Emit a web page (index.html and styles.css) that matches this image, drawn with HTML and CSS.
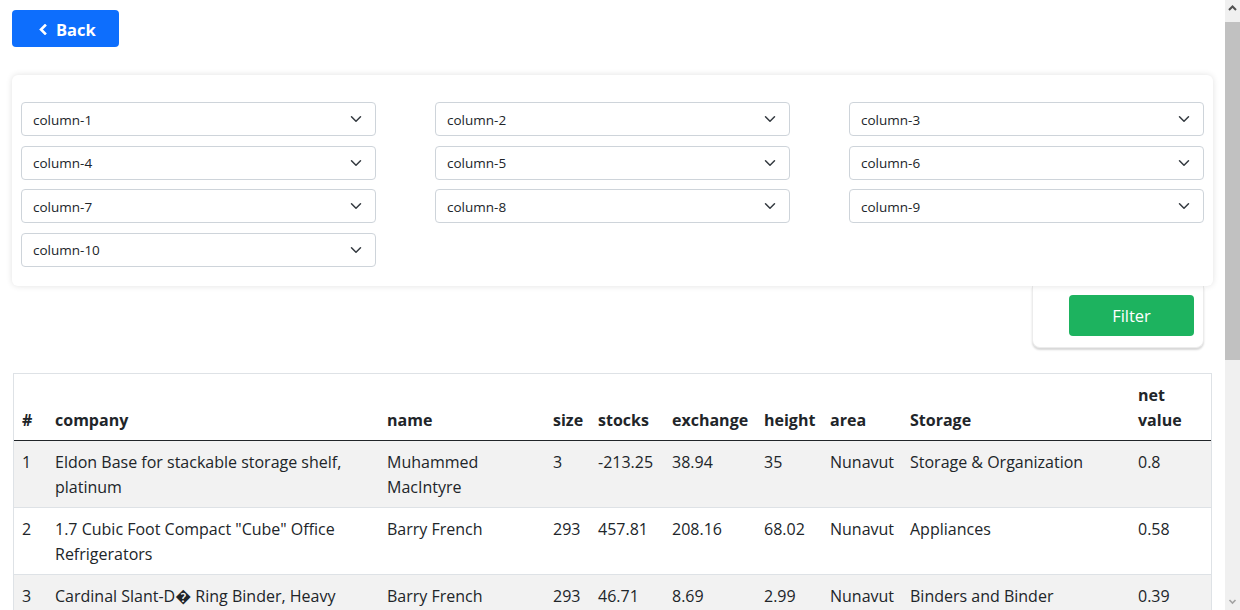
FILE: index.html
```html
<!DOCTYPE html>
<html lang="en">
<head>
<meta charset="utf-8">
<title>Data table</title>
<link rel="stylesheet" href="styles.css">
</head>
<body>
<div class="page">
  <button class="btn-back" type="button">
    <svg class="chev" width="8" height="11" viewBox="0 0 8 11"><polyline points="6,1.5 2,5.5 6,9.5" fill="none" stroke="#fff" stroke-width="2.6" stroke-linecap="square"/></svg>
    <span>Back</span>
  </button>

  <div class="card">
    <div class="select-grid">
      <div class="select-wrap"><select class="form-select"><option>column-1</option></select><svg class="caret" width="16" height="12" viewBox="0 0 16 16"><path d="m2 5 6 6 6-6" fill="none" stroke="#343a40" stroke-width="2" stroke-linecap="round" stroke-linejoin="round"/></svg></div>
      <div class="select-wrap"><select class="form-select"><option>column-2</option></select><svg class="caret" width="16" height="12" viewBox="0 0 16 16"><path d="m2 5 6 6 6-6" fill="none" stroke="#343a40" stroke-width="2" stroke-linecap="round" stroke-linejoin="round"/></svg></div>
      <div class="select-wrap"><select class="form-select"><option>column-3</option></select><svg class="caret" width="16" height="12" viewBox="0 0 16 16"><path d="m2 5 6 6 6-6" fill="none" stroke="#343a40" stroke-width="2" stroke-linecap="round" stroke-linejoin="round"/></svg></div>
      <div class="select-wrap"><select class="form-select"><option>column-4</option></select><svg class="caret" width="16" height="12" viewBox="0 0 16 16"><path d="m2 5 6 6 6-6" fill="none" stroke="#343a40" stroke-width="2" stroke-linecap="round" stroke-linejoin="round"/></svg></div>
      <div class="select-wrap"><select class="form-select"><option>column-5</option></select><svg class="caret" width="16" height="12" viewBox="0 0 16 16"><path d="m2 5 6 6 6-6" fill="none" stroke="#343a40" stroke-width="2" stroke-linecap="round" stroke-linejoin="round"/></svg></div>
      <div class="select-wrap"><select class="form-select"><option>column-6</option></select><svg class="caret" width="16" height="12" viewBox="0 0 16 16"><path d="m2 5 6 6 6-6" fill="none" stroke="#343a40" stroke-width="2" stroke-linecap="round" stroke-linejoin="round"/></svg></div>
      <div class="select-wrap"><select class="form-select"><option>column-7</option></select><svg class="caret" width="16" height="12" viewBox="0 0 16 16"><path d="m2 5 6 6 6-6" fill="none" stroke="#343a40" stroke-width="2" stroke-linecap="round" stroke-linejoin="round"/></svg></div>
      <div class="select-wrap"><select class="form-select"><option>column-8</option></select><svg class="caret" width="16" height="12" viewBox="0 0 16 16"><path d="m2 5 6 6 6-6" fill="none" stroke="#343a40" stroke-width="2" stroke-linecap="round" stroke-linejoin="round"/></svg></div>
      <div class="select-wrap"><select class="form-select"><option>column-9</option></select><svg class="caret" width="16" height="12" viewBox="0 0 16 16"><path d="m2 5 6 6 6-6" fill="none" stroke="#343a40" stroke-width="2" stroke-linecap="round" stroke-linejoin="round"/></svg></div>
      <div class="select-wrap"><select class="form-select"><option>column-10</option></select><svg class="caret" width="16" height="12" viewBox="0 0 16 16"><path d="m2 5 6 6 6-6" fill="none" stroke="#343a40" stroke-width="2" stroke-linecap="round" stroke-linejoin="round"/></svg></div>
    </div>
  </div>

  <div class="filter-box">
    <button class="btn-filter" type="button">Filter</button>
  </div>

  <div class="table-wrap">
    <table class="data-table">
      <colgroup>
        <col class="c-idx"><col class="c-company"><col class="c-name"><col class="c-size"><col class="c-stocks"><col class="c-exchange"><col class="c-height"><col class="c-area"><col class="c-storage"><col class="c-net">
      </colgroup>
      <thead>
        <tr><th>#</th><th>company</th><th>name</th><th>size</th><th>stocks</th><th>exchange</th><th>height</th><th>area</th><th>Storage</th><th>net value</th></tr>
      </thead>
      <tbody>
        <tr><td>1</td><td>Eldon Base for stackable storage shelf, platinum</td><td>Muhammed MacIntyre</td><td>3</td><td>-213.25</td><td>38.94</td><td>35</td><td>Nunavut</td><td>Storage &amp; Organization</td><td>0.8</td></tr>
        <tr><td>2</td><td>1.7 Cubic Foot Compact "Cube" Office Refrigerators</td><td>Barry French</td><td>293</td><td>457.81</td><td>208.16</td><td>68.02</td><td>Nunavut</td><td>Appliances</td><td>0.58</td></tr>
        <tr><td>3</td><td>Cardinal Slant-D� Ring Binder, Heavy Gauge Vinyl</td><td>Barry French</td><td>293</td><td>46.71</td><td>8.69</td><td>2.99</td><td>Nunavut</td><td>Binders and Binder Accessories</td><td>0.39</td></tr>
        <tr><td>4</td><td>R380</td><td>Clay Rozendal</td><td>483</td><td>1198.97</td><td>195.99</td><td>3.99</td><td>Nunavut</td><td>Telephones and Communication</td><td>0.58</td></tr>
        <tr><td>5</td><td>Holmes HEPA Air Purifier</td><td>Carlos Soltero</td><td>515</td><td>30.94</td><td>21.78</td><td>5.94</td><td>Nunavut</td><td>Appliances</td><td>0.5</td></tr>
        <tr><td>6</td><td>G.E. Longer-Life Indoor Recessed Floodlight Bulbs</td><td>Carlos Soltero</td><td>515</td><td>4.43</td><td>6.64</td><td>4.95</td><td>Nunavut</td><td>Office Furnishings</td><td>0.37</td></tr>
        <tr><td>7</td><td>Angle-D Binders with Locking Rings, Label Holders</td><td>Carl Jackson</td><td>613</td><td>-54.04</td><td>7.3</td><td>7.72</td><td>Nunavut</td><td>Binders and Binder Accessories</td><td>0.38</td></tr>
        <tr><td>8</td><td>SAFCO Mobile Desk Side File, Wire Frame</td><td>Carl Jackson</td><td>613</td><td>127.7</td><td>42.76</td><td>6.22</td><td>Nunavut</td><td>Storage &amp; Organization</td><td>0.55</td></tr>
        <tr><td>9</td><td>SAFCO Commercial Wire Shelving, Black</td><td>Monica Federle</td><td>643</td><td>-695.26</td><td>138.14</td><td>35</td><td>Nunavut</td><td>Storage &amp; Organization</td><td>0.6</td></tr>
      </tbody>
    </table>
  </div>
</div>

<div class="scrollbar" aria-hidden="true">
  <svg class="sb-arrow sb-up" width="15" height="17" viewBox="0 0 15 17"><polyline points="4,10 7.5,6.5 11,10" fill="none" stroke="#505050" stroke-width="2"/></svg>
  <div class="sb-track"><div class="sb-thumb"></div></div>
  <svg class="sb-arrow sb-down" width="15" height="17" viewBox="0 0 15 17"><polyline points="4.5,7 7.5,10 10.5,7" fill="none" stroke="#a3a3a3" stroke-width="1.6"/></svg>
</div>
</body>
</html>
```

FILE: styles.css
```css
* { box-sizing: border-box; }

html, body {
  margin: 0;
  background: #fff;
}

body {
  font-family: "Segoe UI", "Open Sans", "Noto Sans", sans-serif;
  color: #212529;
  font-size: 16px;
  line-height: 1.5;
}

.page {
  width: 1225px;
  padding: 10px 12px 24px;
}

.btn-back {
  display: inline-flex;
  align-items: center;
  gap: 9px;
  width: 107px;
  height: 37px;
  padding: 1px 0 0 27px;
  border: none;
  border-radius: 4px;
  background: #0d6efd;
  color: #fff;
  font-family: inherit;
  font-size: 16.5px;
  font-weight: 700;
  cursor: pointer;
}

.chev { display: block; }

.card {
  margin-top: 28px;
  padding: 27px 10px 19px 9px;
  background: #fff;
  border-radius: 6px;
  box-shadow: 0 0 6px rgba(0, 0, 0, 0.12);
  position: relative;
  z-index: 1;
}

.select-grid {
  display: grid;
  grid-template-columns: repeat(3, 355px);
  column-gap: 59px;
  row-gap: 9.5px;
}

.select-wrap {
  position: relative;
}

.form-select {
  display: block;
  width: 100%;
  height: 34px;
  padding: 1px 36px 0 11px;
  border: 1px solid #ced4da;
  border-radius: 4px;
  background: #fff;
  color: #212529;
  font-family: inherit;
  font-size: 13.5px;
  -webkit-appearance: none;
  appearance: none;
}

.caret {
  position: absolute;
  right: 12px;
  top: 11px;
  pointer-events: none;
}

.filter-box {
  width: 172px;
  margin: 0 9px 0 auto;
  padding: 9px 9px 11px 0;
  display: flex;
  justify-content: flex-end;
  background: #fff;
  border: 1px solid #ececec;
  border-top: none;
  border-radius: 0 0 8px 8px;
  box-shadow: 0 2px 2px rgba(0, 0, 0, 0.16);
}

.btn-filter {
  width: 125px;
  height: 41px;
  border: none;
  border-radius: 4px;
  background: #1db35f;
  color: #fff;
  font-family: inherit;
  font-size: 16.5px;
  cursor: pointer;
}

.table-wrap {
  margin: 25px 1px 0;
  border: 1px solid #dee2e6;
}

.data-table {
  width: 100%;
  border-collapse: collapse;
  table-layout: fixed;
  font-size: 16px;
  line-height: 25.5px;
}

.c-idx { width: 33px; }
.c-company { width: 332px; }
.c-name { width: 166px; }
.c-size { width: 45px; }
.c-stocks { width: 74px; }
.c-exchange { width: 92px; }
.c-height { width: 66px; }
.c-area { width: 80px; }
.c-storage { width: 228px; }
.c-net { width: 81px; }

.data-table th {
  text-align: left;
  vertical-align: bottom;
  font-weight: 700;
  padding: 9px 8px 6px;
  border-bottom: 1px solid #212529;
}

.data-table td {
  vertical-align: top;
  padding: 9px 8px 6px;
  border-bottom: 1px solid #dee2e6;
}

.data-table tbody tr:nth-child(odd) td {
  background: #f2f2f2;
}

/* Fake classic scrollbar drawn over the right edge of the viewport */
.scrollbar {
  position: fixed;
  top: 0;
  right: 0;
  width: 15px;
  height: 100vh;
  background: #f0f0f0;
  display: flex;
  flex-direction: column;
}

.sb-arrow {
  display: block;
  flex: none;
}

.sb-track {
  flex: 1;
  padding-top: 5px;
}

.sb-thumb {
  height: 338px;
  background: #c1c1c1;
}
```
